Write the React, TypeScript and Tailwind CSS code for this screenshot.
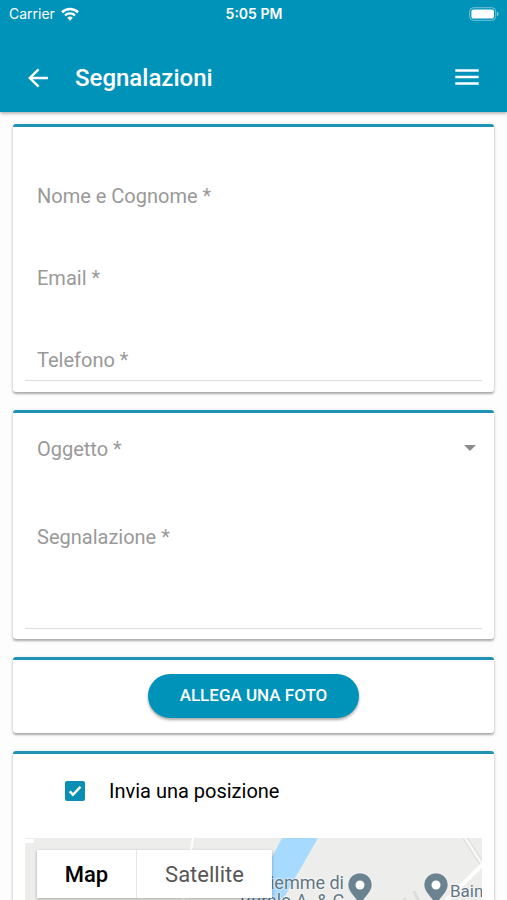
import { useState } from "react";
import type { ReactNode } from "react";

const contactFields = [
  { id: "name", label: "Nome e Cognome *", type: "text" },
  { id: "email", label: "Email *", type: "email" },
  { id: "phone", label: "Telefono *", type: "tel" },
];

function StatusBar() {
  return (
    <div className="grid h-7 grid-cols-3 items-center pr-2 pl-[9px] font-[Inter,sans-serif] text-sm">
      <div className="flex items-center gap-1.5">
        <span>Carrier</span>
        <svg viewBox="0 0 18 14" className="h-3.5 w-[18px]" fill="none">
          <path d="M1 5.2a11.5 11.5 0 0 1 16 0" stroke="currentColor" strokeWidth="2.6" />
          <path d="M4 8.4a7.2 7.2 0 0 1 10 0" stroke="currentColor" strokeWidth="2.4" />
          <path d="M6.2 10.8a4 4 0 0 1 5.6 0L9 13.7z" fill="currentColor" />
        </svg>
      </div>
      <span className="text-center font-semibold">5:05 PM</span>
      <svg viewBox="0 0 30 14" className="h-3.5 w-[30px] justify-self-end">
        <rect x="0.7" y="0.7" width="26" height="12.6" rx="3.8" fill="none" stroke="#fff" strokeOpacity="0.45" />
        <rect x="2.4" y="2.4" width="22.6" height="9.2" rx="2.2" fill="#fff" />
        <path d="M28 4.8c2 .6 2 3.8 0 4.4z" fill="#fff" fillOpacity="0.5" />
      </svg>
    </div>
  );
}

function Header() {
  return (
    <header className="relative z-10 shrink-0 bg-[#0093b9] text-white shadow-[0_1px_4px_rgba(0,0,0,0.4)]">
      <StatusBar />
      <div className="flex h-[84px] items-center px-6 pt-8 pb-4">
        <button type="button" aria-label="Indietro" className="cursor-pointer">
          <svg viewBox="0 0 24 24" className="size-7" fill="currentColor">
            <path d="M20.5 11H7.5l5.700-5.700-1.400-1.400L3.500 12l8.300 8.100 1.400-1.400L7.500 13h13z" />
          </svg>
        </button>
        <h1 className="ml-[23px] flex-1 text-2xl font-medium">Segnalazioni</h1>
        <button type="button" aria-label="Menu" className="cursor-pointer">
          <svg viewBox="0 0 32 32" className="size-8" fill="currentColor">
            <path d="M4.300 7.200h23.400v2.600H4.300zM4.300 13.700h23.400v2.600H4.300zM4.300 20.200h23.400v2.600H4.300z" />
          </svg>
        </button>
      </div>
    </header>
  );
}

function Card({ children }: { children: ReactNode }) {
  return (
    <section className="rounded-[3px] border-t-[3px] border-[#1f93b3] bg-white px-3 shadow-[0_2px_2px_rgba(0,0,0,0.25),0_1px_4px_rgba(0,0,0,0.15)]">
      {children}
    </section>
  );
}

function MapPin() {
  return (
    <svg viewBox="0 0 26 36" className="h-9 w-[26px]">
      <path
        d="M13 1C6.300 1 1 6.300 1 13c0 8 9 12 12 22 3-10 12-14 12-22C25 6.300 19.700 1 13 1z"
        fill="#6b8391"
        stroke="#fff"
        strokeOpacity="0.6"
      />
      <circle cx="13" cy="13" r="4.500" fill="#fff" />
    </svg>
  );
}

function PositionMap() {
  const [mapType, setMapType] = useState("map");

  return (
    <div className="relative h-80 overflow-hidden bg-[#ededec]">
      <svg
        viewBox="0 0 457 320"
        preserveAspectRatio="xMinYMin slice"
        className="size-full"
        fill="none"
      >
        <path d="M257 0h36L270 40 225 120 150 320H90L210 90z" fill="#a6daff" />
        <path d="M0 3h9" stroke="#fff" strokeWidth="4" />
        <path d="M168 0l-14 90-50 230" stroke="#fff" strokeWidth="2" />
        <path d="M440 0l17 26" stroke="#d8d8d8" strokeWidth="5" />
        <path d="M440 0l17 26" stroke="#f7f7f7" strokeWidth="3" />
        <path d="M457 27l-44 44-90 150" stroke="#fff" strokeWidth="4" />
        <path d="M379 60l8 14M389 53l5 11" stroke="#dcdcdc" strokeWidth="3" />
      </svg>
      <div className="absolute top-9 left-[215px] w-[104px] text-right text-lg leading-[18px] whitespace-nowrap text-[#607582] [text-shadow:0_0_2px_#fff,0_0_2px_#fff]">
        <p>Biemme di</p>
        <p className="pr-1">Buralo A. &amp; C.</p>
      </div>
      <div className="absolute top-[34px] left-[322px]">
        <MapPin />
      </div>
      <div className="absolute top-[34px] left-[398px]">
        <MapPin />
      </div>
      <p className="absolute top-11 left-[425px] text-[17px] leading-[18px] whitespace-nowrap text-[#607582] [text-shadow:0_0_2px_#fff,0_0_2px_#fff]">
        Bain
      </p>
      <div className="absolute top-3 left-3 flex h-12 bg-white text-[22px] shadow-[0_1px_3px_rgba(0,0,0,0.3)]">
        <button
          type="button"
          onClick={() => setMapType("map")}
          className={
            mapType == "map"
              ? "w-[100px] border-r border-[#e6e6e6] font-medium text-black"
              : "w-[100px] border-r border-[#e6e6e6] text-[#565656]"
          }
        >
          Map
        </button>
        <button
          type="button"
          onClick={() => setMapType("satellite")}
          className={
            mapType == "satellite"
              ? "w-[135px] font-medium text-black"
              : "w-[135px] text-[#565656]"
          }
        >
          Satellite
        </button>
      </div>
    </div>
  );
}

export default function App() {
  const [sendPosition, setSendPosition] = useState(true);

  return (
    <div className="flex h-screen flex-col bg-[#fdfdfd] font-[Roboto,sans-serif]">
      <Header />
      <main className="flex-1 overflow-y-auto [scrollbar-width:none]">
        <form
          onSubmit={(e) => e.preventDefault()}
          className="flex flex-col gap-[18px] px-[13px] py-3"
        >
          <Card>
            <div className="pt-2 pb-[11px]">
              {contactFields.map((field) => (
                <input
                  key={field.id}
                  id={field.id}
                  type={field.type}
                  aria-label={field.label}
                  placeholder={field.label}
                  className="block h-[82px] w-full px-3 pt-10 text-xl outline-none placeholder:text-[#999] last:border-b last:border-[#dcdcdc]"
                />
              ))}
            </div>
          </Card>

          <Card>
            <div className="relative">
              <select
                aria-label="Oggetto *"
                defaultValue=""
                className="block h-[72px] w-full appearance-none bg-transparent px-3 text-xl text-[#999] outline-none"
              >
                <option value="">Oggetto *</option>
              </select>
              <svg
                viewBox="0 0 12 6"
                className="pointer-events-none absolute top-8 right-1.5 h-1.5 w-3"
              >
                <path d="M0 0h12L6 6z" fill="#8c8c8c" />
              </svg>
            </div>
            <div className="pb-2.5">
              <textarea
                aria-label="Segnalazione *"
                placeholder="Segnalazione *"
                className="block h-36 w-full resize-none border-b border-[#dcdcdc] px-3 pt-[38px] text-xl outline-none placeholder:text-[#999]"
              />
            </div>
          </Card>

          <Card>
            <div className="flex justify-center pt-3.5 pb-[15px]">
              <button
                type="button"
                className="h-11 cursor-pointer rounded-full bg-[#0093b9] px-8 text-[17px] font-medium text-white uppercase shadow-[0_2px_3px_rgba(0,0,0,0.35)]"
              >
                Allega una foto
              </button>
            </div>
          </Card>

          <Card>
            <label className="flex h-[84px] items-center gap-6 pb-2.5 pl-10 text-xl">
              <span className="relative flex size-5">
                <input
                  type="checkbox"
                  checked={sendPosition}
                  onChange={(e) => setSendPosition(e.target.checked)}
                  className="size-5 appearance-none rounded-[2px] border-2 border-[#0a8fb4] checked:bg-[#0a8fb4]"
                />
                {sendPosition && (
                  <svg
                    viewBox="0 0 20 20"
                    className="pointer-events-none absolute inset-0"
                    fill="none"
                  >
                    <path d="M4.700 10.300l3.300 3.400 7.500-8" stroke="#fff" strokeWidth="2.400" />
                  </svg>
                )}
              </span>
              Invia una posizione
            </label>
            {sendPosition && <PositionMap />}
          </Card>
        </form>
      </main>
    </div>
  );
}
